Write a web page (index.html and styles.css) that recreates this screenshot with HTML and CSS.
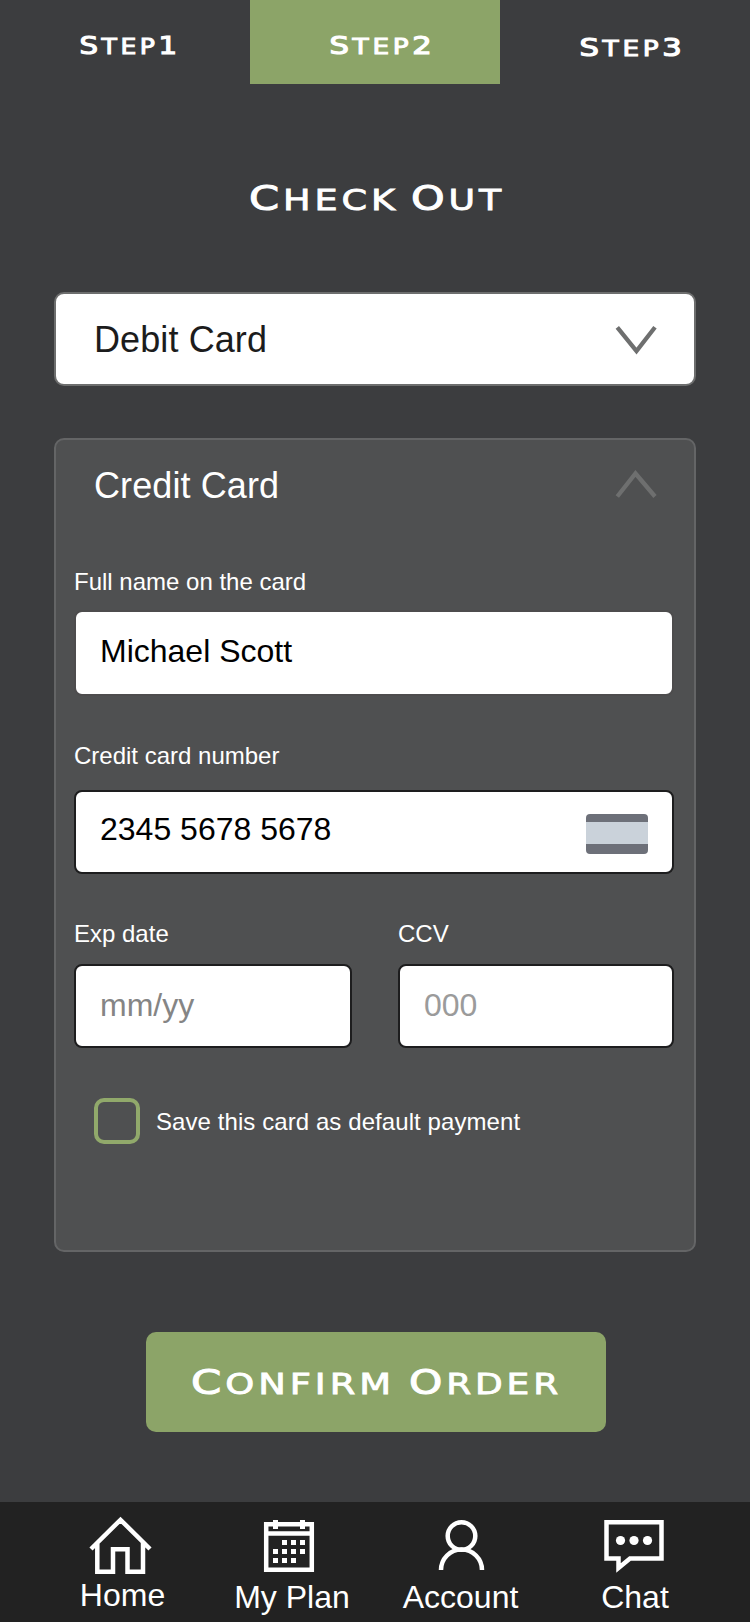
FILE: index.html
```html
<!DOCTYPE html>
<html lang="en">
<head>
<meta charset="utf-8">
<title>Check Out</title>
<link rel="stylesheet" href="styles.css">
</head>
<body>
<header class="steps">
  <div class="step"><svg class="engraved" width="250" height="84"><text x="79.5" y="54" textLength="101" lengthAdjust="spacingAndGlyphs"><tspan class="cap-s">S</tspan><tspan class="low-s">TEP</tspan><tspan class="cap-s">1</tspan></text></svg></div>
  <div class="step step-active"><svg class="engraved" width="250" height="84"><text x="79.5" y="54" textLength="106" lengthAdjust="spacingAndGlyphs"><tspan class="cap-s">S</tspan><tspan class="low-s">TEP</tspan><tspan class="cap-s">2</tspan></text></svg></div>
  <div class="step"><svg class="engraved" width="250" height="84"><text x="79.5" y="56" textLength="106" lengthAdjust="spacingAndGlyphs"><tspan class="cap-s">S</tspan><tspan class="low-s">TEP</tspan><tspan class="cap-s">3</tspan></text></svg></div>
</header>
<main class="content">
  <h1 class="title"><svg class="engraved" width="260" height="60"><text x="4" y="39.5" textLength="150" lengthAdjust="spacingAndGlyphs"><tspan class="cap-l">C</tspan><tspan class="low-l">HECK</tspan></text><text x="166" y="39.5" textLength="94" lengthAdjust="spacingAndGlyphs"><tspan class="cap-l">O</tspan><tspan class="low-l">UT</tspan></text></svg></h1>
  <section class="method method-closed">
    <span>Debit Card</span>
    <svg class="chevron" width="44" height="32"><path d="M4.3 4.3L23.5 28L42 4.3"/></svg>
  </section>
  <section class="panel">
    <div class="method">
      <span>Credit Card</span>
      <svg class="chevron" width="44" height="32"><path d="M4.3 26.5L22.5 3.5L42 26.5"/></svg>
    </div>
    <div class="form">
      <div class="field field-name">
        <label class="label">Full name on the card</label>
        <div class="input input-plain">Michael Scott</div>
      </div>
      <div class="field field-number">
        <label class="label">Credit card number</label>
        <div class="input"><span class="value-number">2345 5678 5678</span><span class="card-icon"></span></div>
      </div>
      <div class="row">
        <div class="field field-exp">
          <label class="label">Exp date</label>
          <div class="input hint">mm/yy</div>
        </div>
        <div class="field field-ccv">
          <label class="label">CCV</label>
          <div class="input hint hint-light">000</div>
        </div>
      </div>
      <div class="save"><span class="checkbox"></span><span class="save-text">Save this card as default payment</span></div>
    </div>
  </section>
  <div class="confirm"><svg class="engraved" width="460" height="100"><text x="45" y="61.5" textLength="204" lengthAdjust="spacingAndGlyphs"><tspan class="cap-l">C</tspan><tspan class="low-l">ONFIRM</tspan></text><text x="263" y="61.5" textLength="153" lengthAdjust="spacingAndGlyphs"><tspan class="cap-l">O</tspan><tspan class="low-l">RDER</tspan></text></svg></div>
</main>
<nav class="tabs">
  <div class="tab tab-home">
    <svg class="icon" width="64" height="64"><path d="M2 37L31.5 7.8L61 37M8.3 31V59.7H24V37.3H38.5V59.7H54V31"/></svg>
    <span class="tab-label">Home</span>
  </div>
  <div class="tab">
    <svg class="icon" width="64" height="64"><path d="M8.2 12.2H53.8V57.8H8.2ZM8 21.5H54"/><path class="solid" d="M15 8h5v9h-5zM42 8h5v9h-5zM24 28h5v5h-5zM33 28h5v5h-5zM42 28h5v5h-5zM15 37h5v5h-5zM24 37h5v5h-5zM33 37h5v5h-5zM42 37h5v5h-5zM15 46h5v5h-5zM24 46h5v5h-5zM33 46h5v5h-5z"/></svg>
    <span class="tab-label">My Plan</span>
  </div>
  <div class="tab">
    <svg class="icon" width="64" height="64"><circle cx="32.5" cy="24" r="13.8"/><path d="M12 58a20.5 20.5 0 0 1 41 0"/></svg>
    <span>Account</span>
  </div>
  <div class="tab">
    <svg class="icon" width="64" height="64"><path d="M4.5 10.3H59.5V46.5H28L16.5 56V46.5H4.5Z"/><g class="solid"><circle cx="18.5" cy="28.5" r="4.6"/><circle cx="32" cy="28.5" r="4.6"/><circle cx="45.5" cy="28.5" r="4.6"/></g></svg>
    <span class="tab-label-chat">Chat</span>
  </div>
</nav>
</body>
</html>
```
FILE: styles.css
```css
* { box-sizing: border-box; }
body {
  margin: 0;
  width: 750px;
  height: 1622px;
  display: flex;
  flex-direction: column;
  overflow: hidden;
  background: #3c3d3f;
  color: #fff;
  font-family: "Liberation Sans", sans-serif;
}
svg { display: block; }
.steps { display: flex; height: 84px; }
.step { width: 250px; }
.step-active { background: #8ca468; }
.engraved {
  fill: #fff;
  font-family: "DejaVu Sans", sans-serif;
  font-weight: 400;
  letter-spacing: 3px;
}
.cap-s { font-size: 25px; stroke: #fff; stroke-width: 1.2px; }
.low-s { font-size: 21.5px; stroke: #fff; stroke-width: 1px; }
.cap-l { font-size: 33px; stroke: #fff; stroke-width: 1px; }
.low-l { font-size: 28px; stroke: #fff; stroke-width: 0.8px; }
.content { flex: 1; padding: 0 54px; }
.title {
  display: flex;
  justify-content: center;
  margin: 86px 0 62px;
}
.method {
  display: flex;
  align-items: center;
  justify-content: space-between;
  height: 92px;
  padding: 0 37px 0 38px;
  font-size: 36px;
  letter-spacing: 0.1px;
}
.method-closed {
  height: 94px;
  padding-top: 1px;
  border: 2px solid #6d6e6e;
  border-radius: 10px;
  background: #fff;
  color: #1c1c1c;
}
.chevron { fill: none; stroke: #6e6f6f; stroke-width: 4.3px; }
.method-closed .chevron { margin-bottom: 2px; }
.panel {
  height: 814px;
  margin-top: 52px;
  border: 2px solid #646566;
  border-radius: 10px;
  background: #4f5051;
}
.form { padding: 36px 20px 0 18px; }
.field { display: flex; flex-direction: column; gap: 16px; }
.field-name { gap: 14px; }
.field-number { gap: 20px; margin: 46px 0; }
.label { font-size: 24px; line-height: 28px; }
.input {
  display: flex;
  align-items: center;
  justify-content: space-between;
  height: 84px;
  padding: 0 24px;
  border: 2px solid #1d1d1e;
  border-radius: 8px;
  background: #fff;
  color: #000;
  font-size: 32px;
}
.input-plain {
  height: 86px;
  padding-bottom: 4px;
  border-color: #4d4c4d;
}
.value-number { margin-top: -6px; }
.hint { padding-bottom: 1px; color: #858585; }
.hint-light { color: #9b9b9b; }
.card-icon {
  width: 62px;
  height: 40px;
  margin-top: 4px;
  border-radius: 4px;
  background: linear-gradient(#6d7079 0 8px, #cad2da 8px 30px, #6d7079 30px);
}
.row { display: flex; justify-content: space-between; }
.field-exp { width: 278px; }
.field-ccv { width: 276px; }
.save {
  display: flex;
  align-items: center;
  gap: 16px;
  margin: 50px 0 0 20px;
  font-size: 24px;
  letter-spacing: 0.08px;
}
.save-text { padding-top: 2px; }
.checkbox {
  width: 46px;
  height: 46px;
  border: 4px solid #91a96b;
  border-radius: 10px;
}
.confirm {
  width: 460px;
  height: 100px;
  margin: 80px 0 0 92px;
  border-radius: 10px;
  background: #8ca468;
}
.tabs {
  display: grid;
  grid-template-columns: 169px 170px 171px 176px;
  height: 120px;
  padding: 10px 28px 0 36px;
  background: #222;
}
.tab {
  display: flex;
  flex-direction: column;
  align-items: center;
  gap: 3px;
  font-size: 32px;
  line-height: 36px;
}
.tab-home { gap: 1px; }
.tab-label { padding-left: 4px; }
.tab-label-chat { padding-left: 2px; }
.icon { fill: none; stroke: #fff; stroke-width: 4.5px; }
.solid { fill: #fff; stroke: none; }
```
